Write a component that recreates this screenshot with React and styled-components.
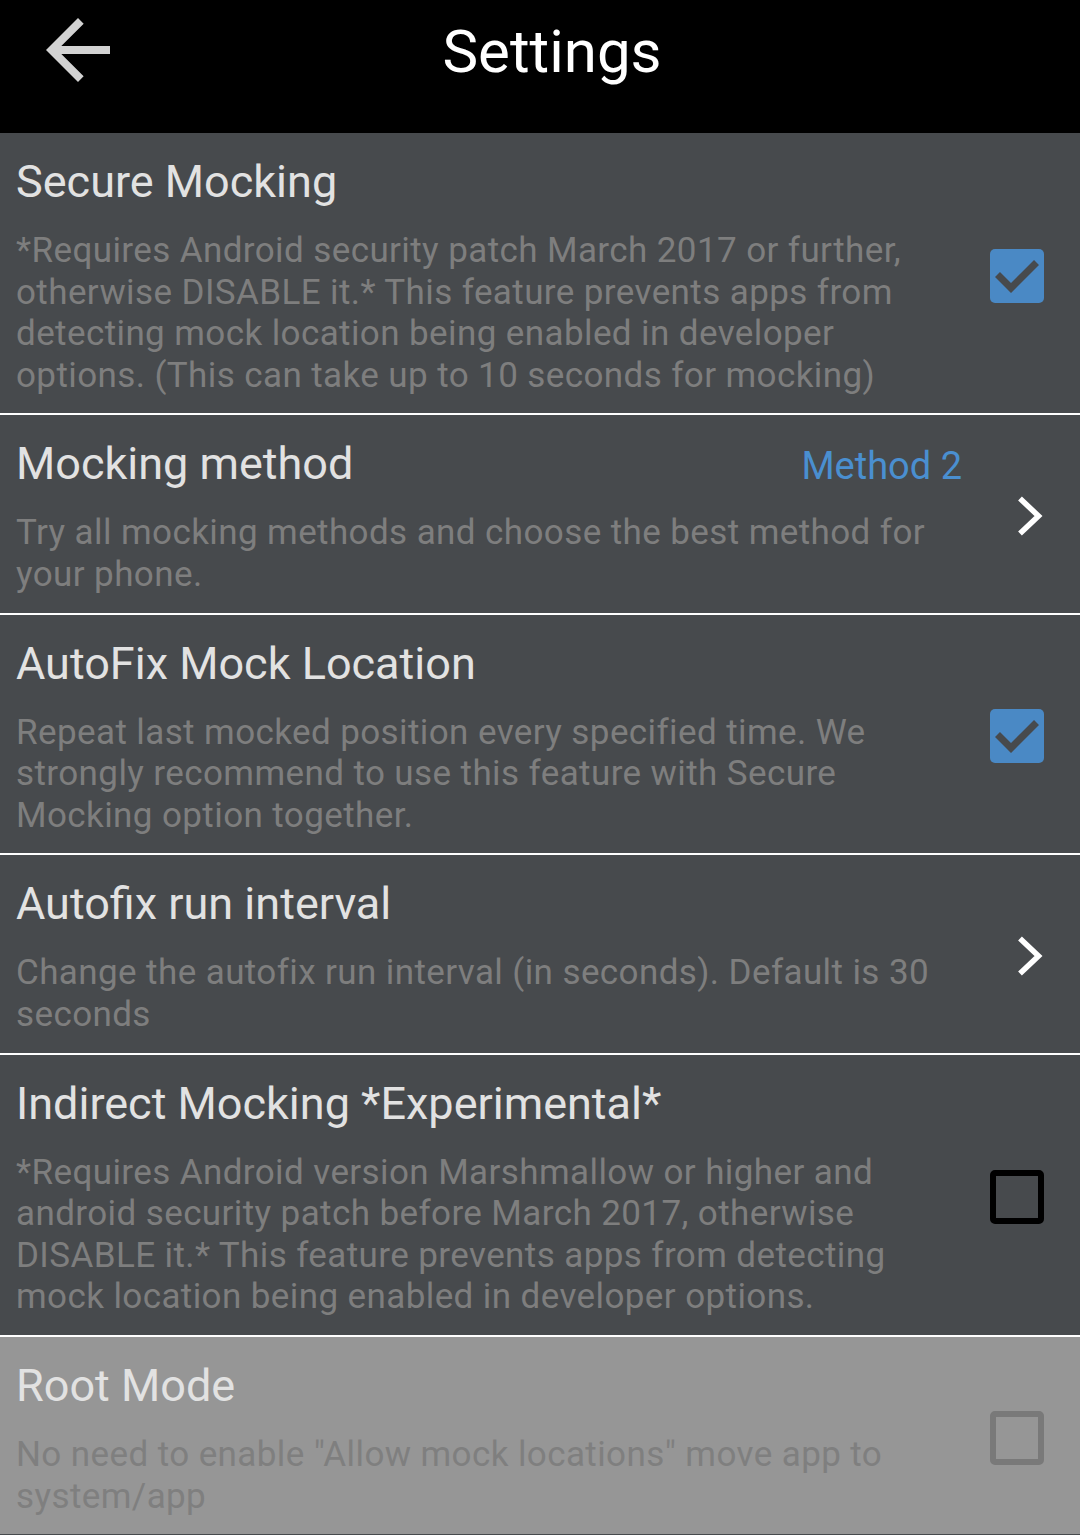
import React from 'react';
import styled, { createGlobalStyle } from 'styled-components';

const GlobalStyle = createGlobalStyle`
  html, body {
    margin: 0;
    padding: 0;
    background-color: #474a4d;
    font-family: Roboto, "Noto Sans", sans-serif;
  }
`;

const Page = styled.div`
  width: 1080px;
  min-height: 1535px;
  background-color: #474a4d;
`;

const Header = styled.header`
  height: 133px;
  background-color: #000;
  display: flex;
  align-items: flex-start;
  padding-right: 102px;
  box-sizing: border-box;
`;

const BackButton = styled.button`
  width: 96px;
  height: 96px;
  margin: 2px 0 0 30px;
  padding: 0;
  border: none;
  background: none;
  display: flex;
`;

const HeaderTitle = styled.h1`
  flex: 1;
  margin: 0;
  padding-top: 16px;
  text-align: center;
  color: #fff;
  font-size: 60px;
  font-weight: 400;
  line-height: normal;
`;

const Row = styled.div`
  display: flex;
  align-items: center;
  padding: 22px 8px 17px 16px;
  background-color: ${p => (p.$disabled ? '#969696' : '#474a4d')};
  border-top: 2px solid #fff;

  &:first-of-type {
    border-top: none;
  }
`;

const TextCol = styled.div`
  flex: 1;
  min-width: 0;
`;

const TitleLine = styled.div`
  display: flex;
  align-items: baseline;
  justify-content: space-between;
  height: 54px;
`;

const Title = styled.div`
  font-size: 45px;
  line-height: 54px;
  color: #e2e2e2;
`;

const Value = styled.div`
  font-size: 38px;
  line-height: 38px;
  color: #4a8fd0;
`;

const Desc = styled.div`
  margin-top: 21px;
  font-size: 35px;
  letter-spacing: 0.4px;
  line-height: 41.6px;
  color: ${p => (p.$disabled ? '#7f7f7f' : '#7e7e7e')};
`;

const Widget = styled.div`
  width: 110px;
  display: flex;
  justify-content: center;
  align-items: center;
`;

const Box = styled.div`
  width: 54px;
  height: 54px;
  box-sizing: border-box;
  border-radius: 5px;
  border: 6px solid ${p => (p.$disabled ? '#797979' : '#000')};
`;

const ChevronIcon = styled.svg`
  margin-left: 25px;
  display: block;
`;

function Checkbox({ checked, disabled }) {
  if (!checked) return <Box $disabled={disabled} />;
  return (
    <svg width="54" height="54" viewBox="0 0 54 54">
      <rect x="0" y="0" width="54" height="54" rx="5" fill="#4a89c5" />
      <polyline points="7.5,25.5 21,39 46.5,13.5" fill="none" stroke="#474a4d" strokeWidth="7" />
    </svg>
  );
}

function Chevron() {
  return (
    <ChevronIcon width="26" height="40" viewBox="0 0 26 40">
      <polyline points="3,2.5 21.5,20 3,37.5" fill="none" stroke="#fff" strokeWidth="5.5" />
    </ChevronIcon>
  );
}

const items = [
  {
    title: 'Secure Mocking',
    desc: '*Requires Android security patch March 2017 or further, otherwise DISABLE it.* This feature prevents apps from detecting mock location being enabled in developer options. (This can take up to 10 seconds for mocking)',
    kind: 'check',
    checked: true,
  },
  {
    title: 'Mocking method',
    value: 'Method 2',
    desc: 'Try all mocking methods and choose the best method for your phone.',
    kind: 'link',
  },
  {
    title: 'AutoFix Mock Location',
    desc: 'Repeat last mocked position every specified time. We strongly recommend to use this feature with Secure Mocking option together.',
    kind: 'check',
    checked: true,
  },
  {
    title: 'Autofix run interval',
    desc: 'Change the autofix run interval (in seconds). Default is 30 seconds',
    kind: 'link',
  },
  {
    title: 'Indirect Mocking *Experimental*',
    desc: '*Requires Android version Marshmallow or higher and android security patch before March 2017, otherwise DISABLE it.* This feature prevents apps from detecting mock location being enabled in developer options.',
    kind: 'check',
    checked: false,
  },
  {
    title: 'Root Mode',
    desc: 'No need to enable "Allow mock locations" move app to system/app',
    kind: 'check',
    checked: false,
    disabled: true,
  },
];

export default function App() {
  return (
    <Page>
      <GlobalStyle />
      <Header>
        <BackButton aria-label="Back">
          <svg width="96" height="96" viewBox="0 0 24 24">
            <path d="M20 11H7.83l5.59-5.59L12 4l-8 8 8 8 1.41-1.41L7.83 13H20v-2z" fill="#d2d2d2" />
          </svg>
        </BackButton>
        <HeaderTitle>Settings</HeaderTitle>
      </Header>
      <div>
        {items.map(item => (
          <Row key={item.title} $disabled={item.disabled}>
            <TextCol>
              <TitleLine>
                <Title>{item.title}</Title>
                {item.value && <Value>{item.value}</Value>}
              </TitleLine>
              <Desc $disabled={item.disabled}>{item.desc}</Desc>
            </TextCol>
            <Widget>
              {item.kind === 'check' ? (
                <Checkbox checked={item.checked} disabled={item.disabled} />
              ) : (
                <Chevron />
              )}
            </Widget>
          </Row>
        ))}
      </div>
    </Page>
  );
}
